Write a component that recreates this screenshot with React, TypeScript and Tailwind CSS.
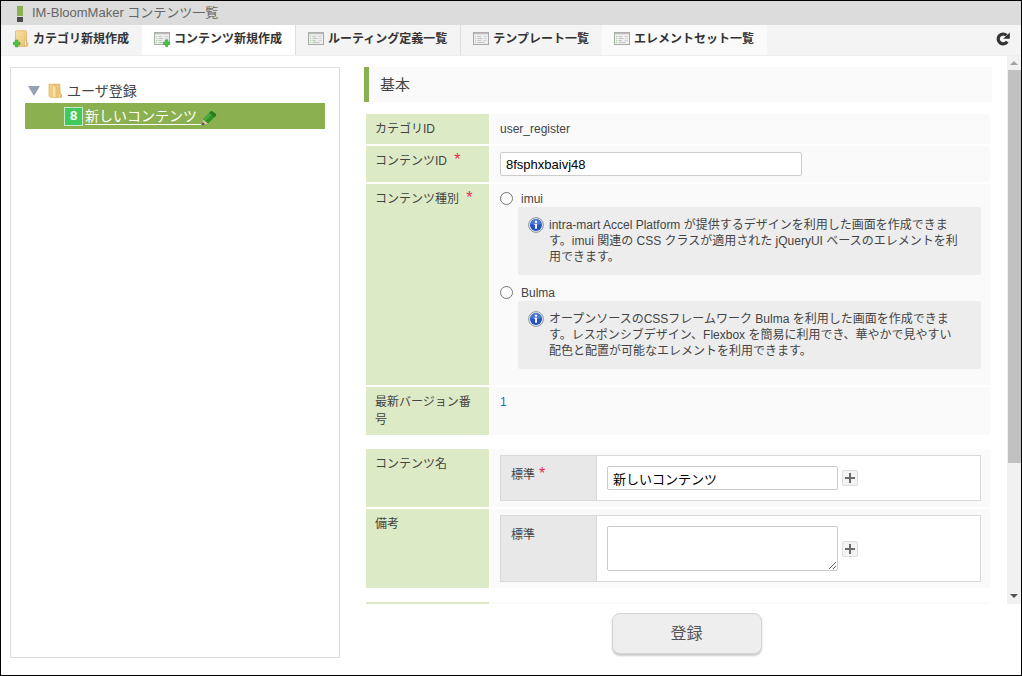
import React, { useState } from 'react';

function FolderIcon({ add }: { add?: boolean }) {
  return (
    <svg width="16" height="18" viewBox="0 0 16 18" className="shrink-0" aria-hidden="true">
      <defs>
        <linearGradient id="folderFill" x1="0" y1="0" x2="1" y2="1">
          <stop offset="0" stopColor="#fbe3a4" />
          <stop offset="1" stopColor="#e6bd6a" />
        </linearGradient>
      </defs>
      <path d="M2.5 1.5Q2.5.8 3.2.8h9.6q.7 0 .7.7V12l1.3.8v2.7l-1 .9H2.5z" fill="url(#folderFill)" stroke="#dcb568" strokeWidth="0.8" />
      <path d="M11.5 16V11.5l2-1.5v6z" fill="#f9ebc4" stroke="#d3a552" strokeWidth="0.5" />
      {add && (
        <path d="M2.3 10h2.6v2.2H7v2.6H4.9V17H2.3v-2.2H.2v-2.6h2.1z" fill="#45c542" stroke="#35a536" strokeWidth="0.6" />
      )}
    </svg>
  );
}

function OpenFolderIcon() {
  return (
    <svg width="15" height="16" viewBox="0 0 15 16" className="shrink-0" aria-hidden="true">
      <path d="M1 1.2h6v13H2l-1-1z" fill="#f4cf80" stroke="#dcb15f" strokeWidth="0.7" />
      <path d="M6.5 1.2h5.2l.6 9.3 1.2 1v2.8H6.5z" fill="#ecc577" stroke="#d9a94f" strokeWidth="0.7" />
      <path d="M4.3 1.6l3.6 2v11.7l-3.6-1.7z" fill="#fae3a9" stroke="#dcb15f" strokeWidth="0.5" />
      <path d="M10.7 14.6v-3.4l1.7-1v4.4z" fill="#fbe9bd" stroke="#cf9c45" strokeWidth="0.4" />
    </svg>
  );
}

function ListIcon({ add }: { add?: boolean }) {
  return (
    <svg width="16" height="16" viewBox="0 0 16 16" className="shrink-0" aria-hidden="true">
      <rect x="0.5" y="1.5" width="15" height="12" fill="#efefef" stroke="#a9a9a9" />
      <path d="M1 2.5h14" stroke="#bdbdbd" strokeWidth="1.5" />
      <path d="M2.5 5v7" stroke="#9ed39a" strokeDasharray="1 1" />
      <path d="M4.5 5.5H8M4.5 7.5h5M4.5 9.5H8M4.5 11.5h7" stroke="#c4c4c4" />
      <path d="M10 5.5h4M11 7.5h3M10 9.5h4" stroke="#d6d6d6" />
      {add && (
        <path d="M11.5 8.8h2.4v2.1h2v2.4h-2v2.1h-2.4v-2.1h-2v-2.4h2z" fill="#45c542" stroke="#35a536" strokeWidth="0.6" />
      )}
    </svg>
  );
}

function PencilIcon() {
  return (
    <svg width="17" height="16" viewBox="0 0 17 16" className="shrink-0" aria-hidden="true">
      <path d="M1.8 9.6L9.6 1.6Q10.6.8 11.6 1.5l3.2 2.6q.8.8 0 1.8L7 13.4z" fill="#2f9226" />
      <path d="M1.8 9.6L9.6 1.6l2.4 2-8 8z" fill="#49a83c" />
      <path d="M9.6 1.6Q10.6.8 11.6 1.5l3.2 2.6q.8.8 0 1.8l-1.4 1.3-5.2-4.3z" fill="#267d20" />
      <path d="M1.8 9.6L7 13.4 1.2 15z" fill="#d8c3a0" />
      <path d="M1.5 12l2.4 2.2L1.1 15.2z" fill="#3c3c3c" />
    </svg>
  );
}

function InfoIcon() {
  return (
    <svg width="16" height="16" viewBox="0 0 16 16" className="shrink-0" aria-hidden="true">
      <circle cx="8" cy="8" r="7.4" fill="#e9e9ec" stroke="#8f959f" strokeWidth="1" />
      <circle cx="8" cy="8" r="6" fill="#2454c4" />
      <path d="M2.4 7a5.7 5.7 0 0 1 11.2 0Q8 9 2.4 7z" fill="#4a76d8" />
      <circle cx="8" cy="4.7" r="1.2" fill="#fff" />
      <path d="M6.5 6.7H9v5H7.1V7.9h-.6z" fill="#fff" />
    </svg>
  );
}

function ReloadIcon() {
  return (
    <svg width="14" height="14" viewBox="0 0 14 14" aria-hidden="true">
      <path d="M11.2 9.6A4.9 4.9 0 1 1 10.4 3.3" fill="none" stroke="#333" strokeWidth="3.2" />
      <path d="M13.8.4v6.4H7.2z" fill="#333" />
    </svg>
  );
}

const tabs = [
  { label: 'カテゴリ新規作成', icon: <FolderIcon add />, style: 'bg-[#f4f4f4]' },
  { label: 'コンテンツ新規作成', icon: <ListIcon add />, style: 'bg-white' },
  { label: 'ルーティング定義一覧', icon: <ListIcon />, style: 'border-x border-[#ddd] bg-[#f4f4f4]' },
  { label: 'テンプレート一覧', icon: <ListIcon />, style: 'bg-[#f4f4f4]' },
  { label: 'エレメントセット一覧', icon: <ListIcon />, style: 'bg-[#fafafa]' },
];

const contentTypes = [
  {
    id: 'imui',
    label: 'imui',
    text: 'intra-mart Accel Platform が提供するデザインを利用した画面を作成できます。imui 関連の CSS クラスが適用された jQueryUI ベースのエレメントを利用できます。',
  },
  {
    id: 'bulma',
    label: 'Bulma',
    text: 'オープンソースのCSSフレームワーク Bulma を利用した画面を作成できます。レスポンシブデザイン、Flexbox を簡易に利用でき、華やかで見やすい配色と配置が可能なエレメントを利用できます。',
  },
];

function Required() {
  return <span className="ml-1 text-base leading-none text-[#f0284f]">*</span>;
}

function Row({ head, children }: { head: React.ReactNode; children?: React.ReactNode }) {
  return (
    <tr>
      <th scope="row" className="w-[123px] bg-[#dcebc6] px-[9px] py-1.5 text-left align-top font-normal">
        {head}
      </th>
      <td className="bg-[#fafafa] px-[9px] py-1.5 align-top">{children}</td>
    </tr>
  );
}

function LocaleBox({ label, children }: { label: React.ReactNode; children: React.ReactNode }) {
  return (
    <div className="flex border border-[#d9d9d9] bg-white">
      <div className="w-[95px] shrink-0 bg-[#e8e8e8] p-2.5">{label}</div>
      <div className="flex flex-1 items-center gap-1 border-l border-[#d9d9d9] px-2.5">
        {children}
        <button type="button" aria-label="追加" className="flex h-4 w-4 items-center justify-center rounded-xs border border-[#ddd] bg-[#f3f3f3]">
          <svg width="10" height="10" viewBox="0 0 10 10" aria-hidden="true">
            <path d="M5 0v10M0 5h10" stroke="#6b6b6b" strokeWidth="2" />
          </svg>
        </button>
      </div>
    </div>
  );
}

function App() {
  const [contentId, setContentId] = useState('8fsphxbaivj48');
  const [name, setName] = useState('新しいコンテンツ');
  const [note, setNote] = useState('');
  const [type, setType] = useState('');

  return (
    <div className="flex h-screen flex-col overflow-hidden border border-black bg-white font-['Liberation_Sans','Noto_Sans_CJK_JP',sans-serif] text-xs leading-[18px] text-[#444]">
      {/* Title */}
      <header className="flex h-6 shrink-0 items-center gap-[9px] bg-[#dcdcdc] px-4">
        <svg width="6" height="17" viewBox="0 0 6 17" aria-hidden="true">
          <path d="M0 1h6v10H0z" fill="#8ab04f" />
          <path d="M0 12h6v5H0z" fill="#4b4b4b" />
        </svg>
        <h1 className="text-[13px] text-[#666]">IM-BloomMaker コンテンツ一覧</h1>
      </header>

      {/* Toolbar */}
      <nav className="flex h-[31px] shrink-0 border-b border-[#eee] bg-[#f4f4f4]">
        {tabs.map((tab) => (
          <button key={tab.label} type="button" className={`flex items-center gap-1 px-3 pb-0.5 font-bold whitespace-nowrap text-[#333] ${tab.style}`}>
            {tab.icon}
            <span className="pr-px">{tab.label}</span>
          </button>
        ))}
        <button type="button" aria-label="更新" className="ml-auto px-[11px] pb-0.5">
          <ReloadIcon />
        </button>
      </nav>

      <div className="flex min-h-0 flex-1">
        {/* Category tree */}
        <aside className="mt-[11px] mb-[17px] ml-[9px] w-[330px] shrink-0 border border-[#ddd] px-3.5 py-2.5 text-sm">
          <div className="flex h-[25px] items-center gap-1 pl-[3px]">
            <button type="button" aria-label="閉じる" className="mr-1">
              <svg width="12" height="10" viewBox="0 0 12 10" aria-hidden="true">
                <path d="M0 0h12L6 10z" fill="#97a1b5" />
              </svg>
            </button>
            <OpenFolderIcon />
            <span>ユーザ登録</span>
          </div>
          <div className="flex h-[26px] items-center gap-0.5 bg-[#8ab04f] pl-[39px]">
            <span className="flex h-[19px] w-[19px] items-center justify-center border border-[#c5ecc9] bg-[#43c95b] text-[13px] font-bold text-white">8</span>
            <a href="#" className="flex items-end text-white underline underline-offset-3">
              <span>新しいコンテンツ&nbsp;</span>
              <PencilIcon />
            </a>
          </div>
        </aside>

        <main className="ml-3 flex min-w-0 flex-1 flex-col">
          <div className="flex min-h-0 flex-1">
            <form id="content-form" className="min-w-0 flex-1 overflow-hidden pt-[11px] pr-[15px] pl-3">
              <h2 className="mb-2.5 flex h-[35px] items-center border-l-5 border-[#8ab04f] bg-[#fafafa] pl-[11px] text-[15px]">
                基本
              </h2>
              <table className="mb-2.5 w-full table-fixed border-separate border-spacing-[2px]">
                <tbody>
                  <Row head="カテゴリID">user_register</Row>
                  <Row head={<label htmlFor="content-id">コンテンツID <Required /></label>}>
                    <input
                      id="content-id"
                      type="text"
                      value={contentId}
                      onChange={(e) => setContentId(e.target.value)}
                      className="block h-6 w-[302px] rounded-xs border border-[#ccc] bg-white px-[5px] text-[13px] text-black"
                    />
                  </Row>
                  <Row head={<>コンテンツ種別 <Required /></>}>
                    <div className="mb-2.5 flex flex-col gap-[9px]">
                      {contentTypes.map((item) => (
                        <div key={item.id}>
                          <label className="flex h-[17px] items-center gap-2">
                            <input
                              type="radio"
                              name="content-type"
                              checked={type === item.id}
                              onChange={() => setType(item.id)}
                              className="h-[13px] w-[13px]"
                            />
                            {item.label}
                          </label>
                          <div className="ml-[18px] flex gap-[5px] rounded-xs bg-[#ededed] py-2.5 pr-5 pl-2.5">
                            <InfoIcon />
                            <p className="leading-4">{item.text}</p>
                          </div>
                        </div>
                      ))}
                    </div>
                  </Row>
                  <Row head="最新バージョン番号">
                    <a href="#" className="text-[#1471b8]">1</a>
                  </Row>
                </tbody>
              </table>
              <table className="mb-2.5 w-full table-fixed border-separate border-spacing-[2px]">
                <tbody>
                  <Row head="コンテンツ名">
                    <LocaleBox label={<label htmlFor="content-name">標準<Required /></label>}>
                      <div className="py-2.5">
                        <input
                          id="content-name"
                          type="text"
                          value={name}
                          onChange={(e) => setName(e.target.value)}
                          className="block h-6 w-[231px] rounded-xs border border-[#ccc] bg-white px-[5px] text-[13px] text-black"
                        />
                      </div>
                    </LocaleBox>
                  </Row>
                  <Row head="備考">
                    <LocaleBox label={<label htmlFor="content-note">標準</label>}>
                      <div className="py-2.5">
                        <textarea
                          id="content-note"
                          value={note}
                          onChange={(e) => setNote(e.target.value)}
                          className="block h-[45px] w-[231px] rounded-xs border border-[#ccc] bg-white px-[5px] text-[13px] text-black"
                        />
                      </div>
                    </LocaleBox>
                  </Row>
                </tbody>
              </table>
              <table className="w-full table-fixed border-separate border-spacing-[2px]">
                <tbody>
                  <Row head={<br />} />
                </tbody>
              </table>
            </form>

            {/* Scrollbar */}
            <div className="flex w-3.5 shrink-0 flex-col items-center bg-[#f1f1f1]" aria-hidden="true">
              <div className="flex h-3.5 items-center">
                <svg width="8" height="4" viewBox="0 0 8 4"><path d="M0 4h8L4 0z" fill="#a3a3a3" /></svg>
              </div>
              <div className="w-full flex-1 pl-px">
                <div className="h-[76%] bg-[#c1c1c1]" />
              </div>
              <div className="flex h-[17px] items-center">
                <svg width="8" height="4" viewBox="0 0 8 4"><path d="M0 0h8L4 4z" fill="#505050" /></svg>
              </div>
            </div>
          </div>

          {/* Submit */}
          <div className="flex h-[71px] shrink-0 justify-center pt-[9px]">
            <button
              type="button"
              className="h-[41px] w-[150px] rounded-lg border border-[#d4d4d4] bg-[#eee] text-base text-[#555] shadow-[0_2px_2px_rgba(0,0,0,0.2)]"
            >
              登録
            </button>
          </div>
        </main>
      </div>
    </div>
  );
}

export default App;
